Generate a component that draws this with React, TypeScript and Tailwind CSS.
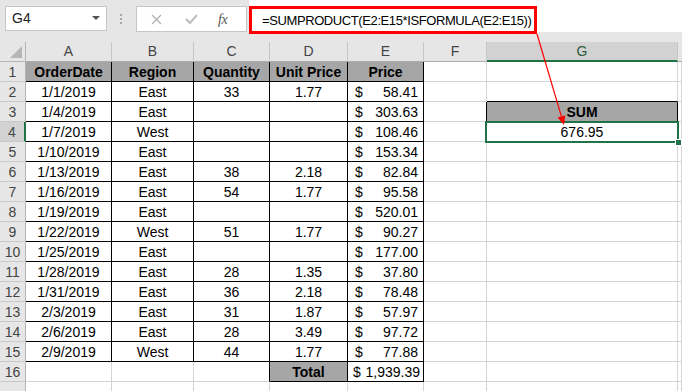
import React from "react";

type Row = [string, string, string, string, string];

const data: Row[] = [
  ["1/1/2019", "East", "33", "1.77", "58.41"],
  ["1/4/2019", "East", "", "", "303.63"],
  ["1/7/2019", "West", "", "", "108.46"],
  ["1/10/2019", "East", "", "", "153.34"],
  ["1/13/2019", "East", "38", "2.18", "82.84"],
  ["1/16/2019", "East", "54", "1.77", "95.58"],
  ["1/19/2019", "East", "", "", "520.01"],
  ["1/22/2019", "West", "51", "1.77", "90.27"],
  ["1/25/2019", "East", "", "", "177.00"],
  ["1/28/2019", "East", "28", "1.35", "37.80"],
  ["1/31/2019", "East", "36", "2.18", "78.48"],
  ["2/3/2019", "East", "31", "1.87", "57.97"],
  ["2/6/2019", "East", "28", "3.49", "97.72"],
  ["2/9/2019", "West", "44", "1.77", "77.88"],
];

const GRID =
  "grid grid-cols-[26px_86px_82px_76px_78px_76px_63px_191px_1fr] h-[20px]";

const base =
  "box-border h-[20px] border-r border-b flex items-center pt-[1px] overflow-visible whitespace-nowrap";
const grid = "border-[#d4d4d4]";
const blk = "border-black";

function RowHead({ n, sel }: { n?: number; sel?: boolean }) {
  return (
    <div
      className={
        "box-border h-[20px] border-b border-[#c9c9c9] flex items-center justify-center pt-[1px] text-[14px] " +
        (sel
          ? "bg-[#d2d2d2] border-r-2 border-r-[#217346] text-[#3f4a44]"
          : "bg-[#e6e6e6] border-r border-r-[#b4b4b4] text-[#444]")
      }
    >
      {n}
    </div>
  );
}

function Price({ v, extra }: { v: string; extra?: string }) {
  return (
    <div className={`${base} ${blk} justify-between ${extra ?? "pl-[7px] pr-[5px]"}`}>
      <span>$</span>
      <span>{v}</span>
    </div>
  );
}

export default function App() {
  return (
    <div
      className="relative w-[682px] h-[391px] overflow-hidden bg-white text-black"
      style={{ fontFamily: "'Liberation Sans', Arial, sans-serif" }}
    >
      {/* Formula bar */}
      <div className="relative h-[42px] bg-[#e6e6e6] flex items-start">
        <div className="ml-[5px] mt-[6px] w-[102px] h-[25px] bg-white border border-[#c6c6c6] flex items-center justify-between pl-[6px] pr-[6px]">
          <span className="text-[14px] text-[#222]">G4</span>
          <svg width="8" height="5" viewBox="0 0 8 5">
            <path d="M0 0 L8 0 L4 4 Z" fill="#555" />
          </svg>
        </div>
        <div className="ml-[13px] mt-[14px] flex flex-col gap-[2px]">
          <div className="w-[2px] h-[2px] bg-[#a8a8a8]" />
          <div className="w-[2px] h-[2px] bg-[#a8a8a8]" />
          <div className="w-[2px] h-[2px] bg-[#a8a8a8]" />
        </div>
        <div className="ml-[14px] mt-[6px] w-[111px] h-[26px] bg-white border border-[#c6c6c6] flex items-center">
          <svg className="ml-[14px]" width="11" height="11" viewBox="0 0 11 11">
            <path d="M1 1 L10 10 M10 1 L1 10" stroke="#b0b0b0" strokeWidth="1.3" />
          </svg>
          <svg className="ml-[23px]" width="13" height="10" viewBox="0 0 13 10">
            <path d="M1 5 L5 9 L12 1" stroke="#bdbdbd" strokeWidth="2" fill="none" />
          </svg>
          <span
            className="ml-[20px] text-[14px] italic text-[#555] tracking-[-0.5px]"
            style={{ fontFamily: "'Liberation Serif', serif" }}
          >
            fx
          </span>
        </div>
        <div className="ml-[2px] h-[32px] flex-1 bg-white" />
        <div className="absolute left-[249px] top-[6px] w-[288px] h-[28px] border-[3px] border-[#ff0000] flex items-center pl-[10px]">
          <span className="text-[13px] tracking-[-0.4px] leading-none text-black">
            =SUMPRODUCT(E2:E15*ISFORMULA(E2:E15))
          </span>
        </div>
      </div>

      {/* Column headers */}
      <div className={GRID}>
        <div className="box-border h-[20px] bg-[#e6e6e6] border-r border-b border-[#b4b4b4] relative">
          <svg className="absolute right-[3px] bottom-[3px]" width="12" height="12" viewBox="0 0 12 12">
            <path d="M12 0 L12 12 L0 12 Z" fill="#b5b5b5" />
          </svg>
        </div>
        {["A", "B", "C", "D", "E", "F"].map((c) => (
          <div
            key={c}
            className="box-border h-[20px] bg-[#e6e6e6] border-r border-r-[#c6c6c6] border-b border-b-[#ababab] flex items-center justify-center text-[14px] text-[#444]"
          >
            {c}
          </div>
        ))}
        <div className="box-border h-[20px] bg-[#d2d2d2] border-r border-r-[#c6c6c6] border-b-2 border-b-[#217346] flex items-center justify-center text-[14px] text-[#2b5e42]">
          G
        </div>
        <div className="box-border h-[20px] bg-[#e6e6e6] border-b border-b-[#ababab]" />
      </div>

      {/* Row 1: headers */}
      <div className={GRID + " text-[14px]"}>
        <RowHead n={1} />
        {["OrderDate", "Region", "Quantity", "Unit Price", "Price"].map((h) => (
          <div key={h} className={`${base} ${blk} justify-center font-bold bg-[#a6a6a6]`}>
            {h}
          </div>
        ))}
        <div className={`${base} ${grid}`} />
        <div className={`${base} ${grid}`} />
        <div className={`${base} ${grid}`} />
      </div>

      {/* Data rows */}
      {data.map((r, i) => {
        const n = i + 2;
        return (
          <div key={n} className={GRID + " text-[14px]"}>
            <RowHead n={n} sel={n === 4} />
            <div className={`${base} ${blk} justify-center`}>{r[0]}</div>
            <div className={`${base} ${blk} justify-center`}>{r[1]}</div>
            <div className={`${base} ${blk} justify-center`}>{r[2]}</div>
            <div className={`${base} ${blk} justify-center`}>{r[3]}</div>
            <Price v={r[4]} />
            <div
              className={`${base} ${
                n === 3 || n === 4 ? "border-r-black border-b-[#d4d4d4]" : grid
              }`}
            />
            {n === 2 ? (
              <div className={`${base} border-r-[#d4d4d4] border-b-black`} />
            ) : n === 3 ? (
              <div className={`${base} ${blk} justify-center font-bold bg-[#a6a6a6]`}>SUM</div>
            ) : n === 4 ? (
              <div className={`${base} ${grid} justify-center relative`}>
                <span>676.95</span>
                <div className="absolute left-[-2px] top-[-1px] right-[-2px] bottom-[-2px] border-2 border-[#217346]" />
                <div className="absolute right-[-5px] bottom-[-5px] w-[7px] h-[7px] bg-[#217346] border border-white" />
              </div>
            ) : (
              <div className={`${base} ${grid}`} />
            )}
            <div className={`${base} ${grid}`} />
          </div>
        );
      })}

      {/* Row 16: total */}
      <div className={GRID + " text-[14px]"}>
        <RowHead n={16} />
        <div className={`${base} ${grid}`} />
        <div className={`${base} ${grid}`} />
        <div className={`${base} border-r-black border-b-[#d4d4d4]`} />
        <div className={`${base} ${blk} justify-center font-bold bg-[#a6a6a6]`}>Total</div>
        <Price v="1,939.39" extra="pl-[5px] pr-[3px]" />
        <div className={`${base} ${grid}`} />
        <div className={`${base} ${grid}`} />
        <div className={`${base} ${grid}`} />
      </div>

      {/* Row 17 (partly visible) */}
      <div className={GRID + " text-[14px]"}>
        <RowHead />
        {Array.from({ length: 8 }).map((_, k) => (
          <div key={k} className={`${base} ${grid}`} />
        ))}
      </div>

      {/* Red arrow annotation */}
      <svg
        className="absolute left-0 top-0 pointer-events-none"
        width="682"
        height="391"
        viewBox="0 0 682 391"
      >
        <line x1="537" y1="34" x2="561.4" y2="116.4" stroke="#ff0000" strokeWidth="1.2" />
        <polygon points="564,125 565.3,115.3 557.6,117.5" fill="#ff0000" />
      </svg>
    </div>
  );
}
